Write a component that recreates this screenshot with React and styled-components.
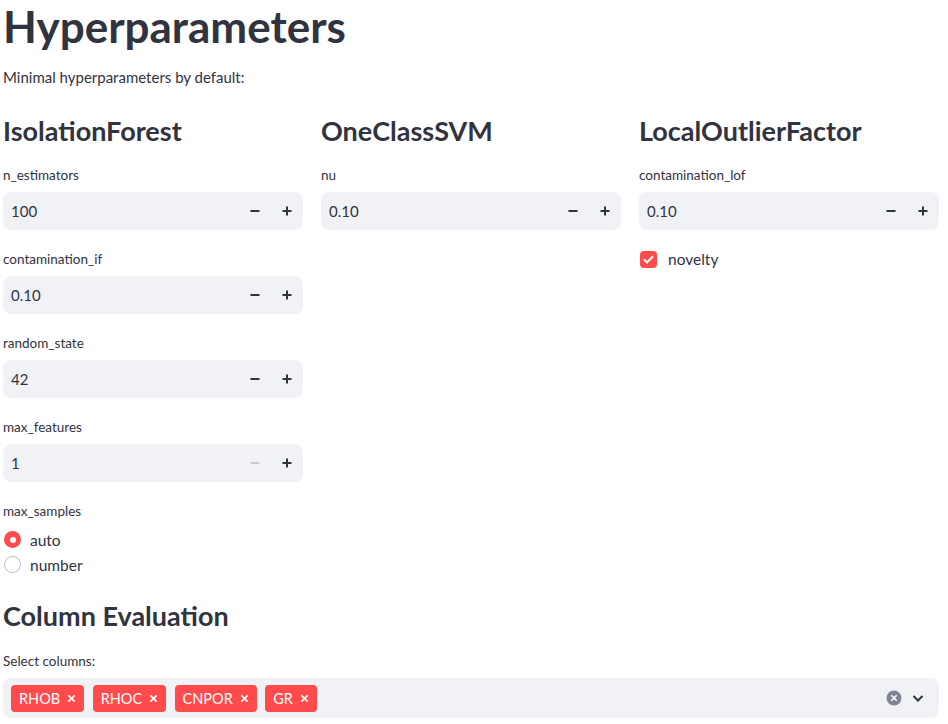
import React, { useState } from "react";
import styled, { createGlobalStyle } from "styled-components";

const GlobalStyle = createGlobalStyle`
  html, body {
    margin: 0;
    padding: 0;
    background: #ffffff;
  }
  body {
    font-family: Lato, "Noto Sans", sans-serif;
    color: #31333f;
  }
  * {
    box-sizing: border-box;
  }
`;

const Page = styled.div`
  width: 948px;
  padding: 0 9px 0 3px;
`;

const Title = styled.h1`
  margin: 0;
  font-size: 44px;
  font-weight: 700;
  line-height: 53px;
  color: #31333f;
`;

const Subtitle = styled.p`
  margin: 12px 0 0;
  font-size: 15px;
  line-height: 24px;
`;

const Columns = styled.div`
  display: grid;
  grid-template-columns: repeat(3, 300px);
  column-gap: 18px;
  margin-top: 24px;
`;

const Column = styled.div`
  display: flex;
  flex-direction: column;
`;

const Heading = styled.h2`
  margin: 0;
  font-size: 27px;
  font-weight: 700;
  line-height: 36px;
  color: #31333f;
`;

const Stack = styled.div`
  display: flex;
  flex-direction: column;
  gap: 19px;
  margin-top: 16px;
`;

const Field = styled.div`
  display: flex;
  flex-direction: column;
`;

const Label = styled.label`
  font-size: 13.5px;
  line-height: 20px;
  height: 20px;
  margin-bottom: 7px;
`;

const NumberBox = styled.div`
  display: flex;
  align-items: center;
  height: 38px;
  background: #f0f2f6;
  border-radius: 8px;
  padding-left: 8px;
`;

const Value = styled.span`
  flex: 1;
  font-size: 15px;
`;

const StepButton = styled.button`
  width: 32px;
  height: 38px;
  border: none;
  background: transparent;
  padding: 0;
  display: flex;
  align-items: center;
  justify-content: center;
  color: ${(p) => (p.disabled ? "#c9ccd4" : "#31333f")};
`;

const Check = styled.div`
  display: flex;
  align-items: center;
  gap: 11px;
  font-size: 15.5px;
  margin-top: 1px;
  padding-left: 1px;
`;

const CheckBox = styled.span`
  width: 17px;
  height: 17px;
  border-radius: 4px;
  background: #ff4b4b;
  display: flex;
  align-items: center;
  justify-content: center;
`;

const RadioGroup = styled.div`
  display: flex;
  flex-direction: column;
  gap: 4px;
  margin-top: 1px;
`;

const RadioRow = styled.div`
  display: flex;
  align-items: center;
  gap: 9px;
  height: 21px;
  font-size: 15.5px;
  padding-left: 1px;
`;

const RadioDot = styled.span`
  width: 17px;
  height: 17px;
  border-radius: 50%;
  background: ${(p) => (p.checked ? "#ff4b4b" : "#ffffff")};
  border: ${(p) => (p.checked ? "none" : "1px solid #b9bbc2")};
  display: flex;
  align-items: center;
  justify-content: center;
  &::after {
    content: "";
    width: 6px;
    height: 6px;
    border-radius: 50%;
    background: #ffffff;
    display: ${(p) => (p.checked ? "block" : "none")};
  }
`;

const Section = styled.div`
  margin-top: 23px;
`;

const SelectField = styled(Field)`
  margin-top: 17px;
`;

const MultiSelect = styled.div`
  display: flex;
  align-items: center;
  height: 40px;
  width: 936px;
  background: #f0f2f6;
  border-radius: 8px;
  padding: 0 8px;
  gap: 8px;
`;

const Tags = styled.div`
  flex: 1;
  display: flex;
  gap: 8.5px;
`;

const Tag = styled.span`
  display: inline-flex;
  align-items: center;
  gap: 7px;
  height: 27px;
  padding: 0 8px;
  background: #ff4b4b;
  color: #ffffff;
  border-radius: 4px;
  font-size: 14.5px;
`;

const Icons = styled.div`
  display: flex;
  align-items: center;
  gap: 8px;
  padding-right: 5px;
`;

const Minus = () => (
  <svg width="10" height="10" viewBox="0 0 10 10">
    <rect x="0.5" y="4" width="9" height="2" fill="currentColor" />
  </svg>
);

const Plus = () => (
  <svg width="10" height="10" viewBox="0 0 10 10">
    <rect x="0.5" y="4" width="9" height="2" fill="currentColor" />
    <rect x="4" y="0.5" width="2" height="9" fill="currentColor" />
  </svg>
);

const NumberInput = ({ label, value, minDisabled }) => (
  <Field>
    <Label>{label}</Label>
    <NumberBox>
      <Value>{value}</Value>
      <StepButton disabled={minDisabled}>
        <Minus />
      </StepButton>
      <StepButton>
        <Plus />
      </StepButton>
    </NumberBox>
  </Field>
);

const SmallX = () => (
  <svg width="9" height="9" viewBox="0 0 10 10">
    <path d="M1.5 1.5 L8.5 8.5 M8.5 1.5 L1.5 8.5" stroke="#fff" strokeWidth="1.8" />
  </svg>
);

export default function App() {
  const [maxSamples, setMaxSamples] = useState("auto");
  const tags = ["RHOB", "RHOC", "CNPOR", "GR"];

  return (
    <>
      <GlobalStyle />
      <Page>
        <Title>Hyperparameters</Title>
        <Subtitle>Minimal hyperparameters by default:</Subtitle>
        <Columns>
          <Column>
            <Heading>IsolationForest</Heading>
            <Stack>
              <NumberInput label="n_estimators" value="100" />
              <NumberInput label="contamination_if" value="0.10" />
              <NumberInput label="random_state" value="42" />
              <NumberInput label="max_features" value="1" minDisabled />
              <Field>
                <Label>max_samples</Label>
                <RadioGroup>
                  {["auto", "number"].map((opt) => (
                    <RadioRow key={opt} onClick={() => setMaxSamples(opt)}>
                      <RadioDot checked={maxSamples === opt} />
                      {opt}
                    </RadioRow>
                  ))}
                </RadioGroup>
              </Field>
            </Stack>
          </Column>
          <Column>
            <Heading>OneClassSVM</Heading>
            <Stack>
              <NumberInput label="nu" value="0.10" />
            </Stack>
          </Column>
          <Column>
            <Heading>LocalOutlierFactor</Heading>
            <Stack>
              <NumberInput label="contamination_lof" value="0.10" />
              <Check>
                <CheckBox>
                  <svg width="11" height="9" viewBox="0 0 11 9">
                    <path d="M1 4.5 L4 7.5 L10 1.2" stroke="#fff" strokeWidth="2" fill="none" />
                  </svg>
                </CheckBox>
                novelty
              </Check>
            </Stack>
          </Column>
        </Columns>
        <Section>
          <Heading>Column Evaluation</Heading>
          <SelectField>
            <Label>Select columns:</Label>
            <MultiSelect>
              <Tags>
                {tags.map((t) => (
                  <Tag key={t}>
                    {t}
                    <SmallX />
                  </Tag>
                ))}
              </Tags>
              <Icons>
                <svg width="16" height="16" viewBox="0 0 16 16">
                  <circle cx="8" cy="8" r="7.5" fill="#808495" />
                  <path d="M5.3 5.3 L10.7 10.7 M10.7 5.3 L5.3 10.7" stroke="#fff" strokeWidth="1.6" />
                </svg>
                <svg width="16" height="16" viewBox="0 0 16 16">
                  <path d="M3.5 6 L8 10.5 L12.5 6" stroke="#31333f" strokeWidth="2" fill="none" />
                </svg>
              </Icons>
            </MultiSelect>
          </SelectField>
        </Section>
      </Page>
    </>
  );
}
